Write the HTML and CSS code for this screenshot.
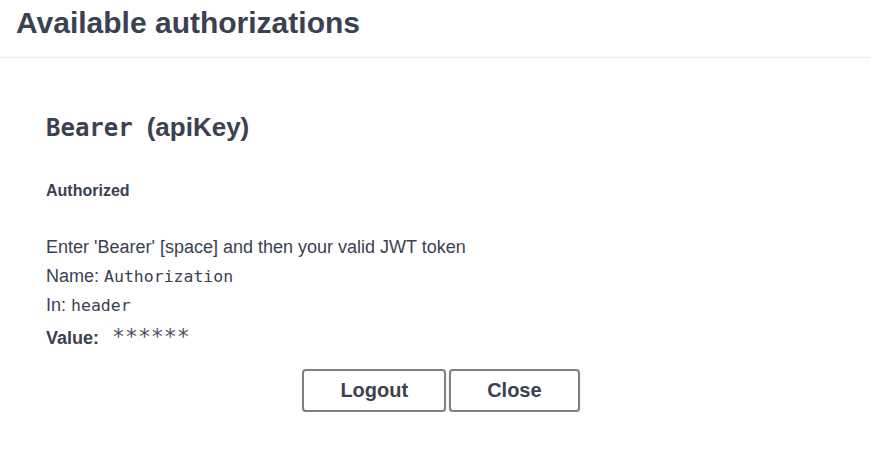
FILE: index.html
```html
<!DOCTYPE html>
<html>
<head>
<meta charset="utf-8">
<link rel="stylesheet" href="styles.css">
</head>
<body>
<div class="modal">
  <div class="modal-header">
    <h3 class="modal-title">Available authorizations</h3>
  </div>
  <div class="modal-body">
    <h4 class="scheme-title"><code class="scheme-code">Bearer</code>(apiKey)</h4>
    <h6 class="status">Authorized</h6>
    <div class="info">
      <p class="line">Enter 'Bearer' [space] and then your valid JWT token</p>
      <p class="line">Name: <code class="mono">Authorization</code></p>
      <p class="line">In: <code class="mono">header</code></p>
      <p class="line value-line"><span class="value-label">Value:</span><code class="value-code">******</code></p>
    </div>
    <div class="btn-group">
      <button class="btn">Logout</button>
      <button class="btn">Close</button>
    </div>
  </div>
</div>
</body>
</html>
```
FILE: styles.css
```css
html, body {
  margin: 0;
  padding: 0;
  background: #ffffff;
}

body {
  font-family: "Liberation Sans", Arial, sans-serif;
  color: #3b4151;
}

.modal-header {
  height: 51px;
  padding: 6px 16px 0;
  border-bottom: 1px solid #ededed;
}

.modal-title {
  margin: 0;
  font-size: 30px;
  line-height: 34px;
  font-weight: 700;
}

.modal-body {
  padding: 0 35px 0 46px;
}

.scheme-title {
  margin: 54px 0 0;
  font-size: 26px;
  line-height: 30px;
  font-weight: 700;
}

.scheme-code {
  font-family: "DejaVu Sans Mono", monospace;
  font-size: 24px;
  font-weight: 700;
  margin-right: 14px;
}

.status {
  margin: 38px 0 0;
  font-size: 16px;
  line-height: 20px;
  font-weight: 700;
}

.info {
  margin-top: 32px;
}

.line {
  margin: 0;
  font-size: 18px;
  line-height: 29px;
}

.mono {
  font-family: "DejaVu Sans Mono", monospace;
  font-size: 16.5px;
  line-height: 1;
}

.value-line {
  margin-top: 4px;
}

.value-label {
  font-weight: 700;
}

.value-code {
  font-family: "DejaVu Sans Mono", monospace;
  font-size: 21.5px;
  line-height: 1;
  margin-left: 13px;
  color: #4a5060;
}

.btn-group {
  display: flex;
  justify-content: center;
  gap: 3px;
  margin-top: 16px;
}

.btn {
  height: 43px;
  padding: 0 36px;
  border: 2px solid #808080;
  border-radius: 4px;
  background: #ffffff;
  box-shadow: 0 1px 2px rgba(0, 0, 0, 0.15);
  font-family: "Liberation Sans", Arial, sans-serif;
  font-size: 20px;
  font-weight: 700;
  color: #3b4151;
}
```
